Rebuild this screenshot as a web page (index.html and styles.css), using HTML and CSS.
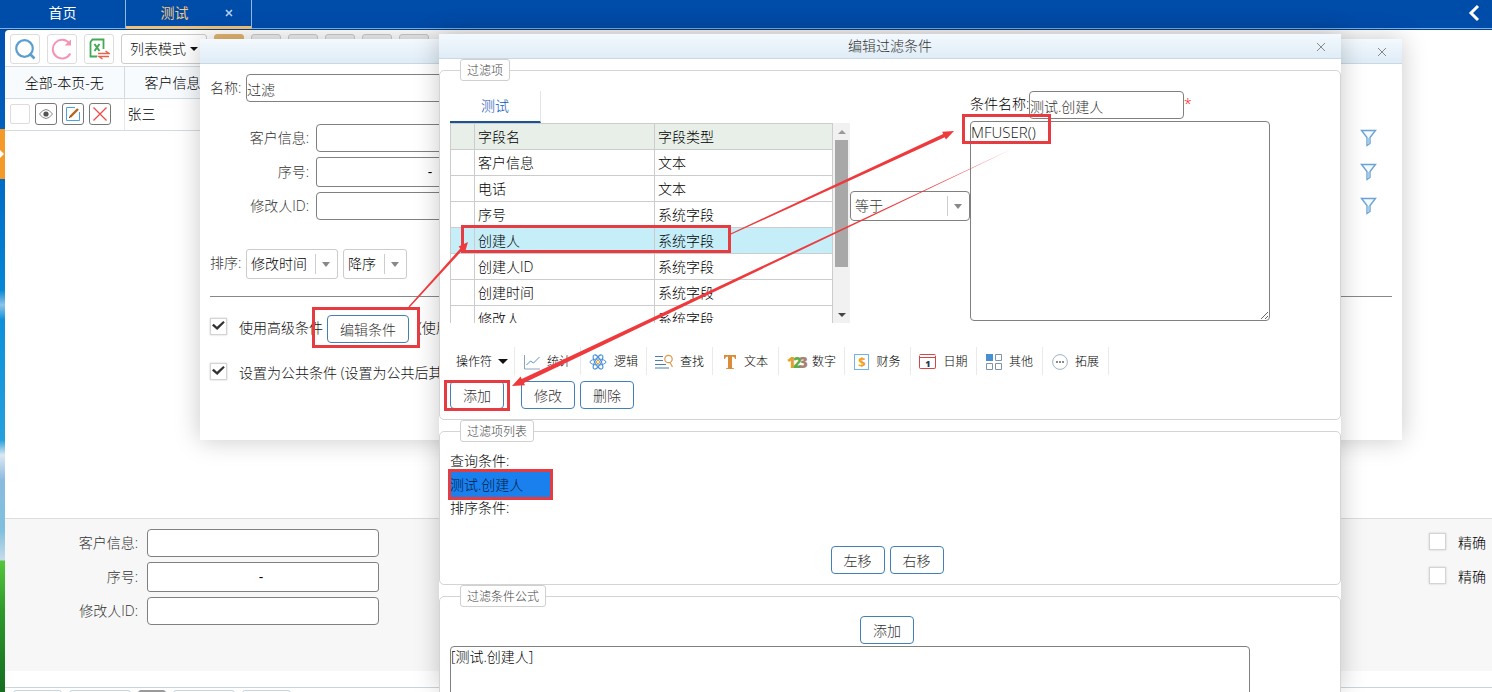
FILE: index.html
```html
<!DOCTYPE html>
<html lang="zh-CN">
<head>
<meta charset="utf-8">
<title>编辑过滤条件</title>
<link rel="stylesheet" href="styles.css">
</head>
<body>
<header class="topbar">
  <nav class="tabs">
    <a class="tab" href="#home">首页</a>
    <a class="tab tab-active" href="#test">测试</a>
    <button class="tab-close" aria-label="关闭标签"><svg width="8" height="8" viewBox="0 0 8 8"><path d="M1 1l6 6M7 1L1 7" stroke="#b9cfee" stroke-width="1.6"/></svg></button>
  </nav>
  <button class="collapse" aria-label="收起"><svg width="12" height="18" viewBox="0 0 12 18"><path d="M10 2L3 9l7 7" fill="none" stroke="#fff" stroke-width="3"/></svg></button>
</header>

<div class="shell">
  <aside class="scenery"><button class="handle" aria-label="展开"><svg width="5" height="10" viewBox="0 0 5 10"><path d="M0 1l4 4-4 4z" fill="#fff"/></svg></button></aside>
  <main class="page">
    <div class="toolbar">
      <button class="tool" aria-label="查询"><svg width="22" height="22" viewBox="0 0 22 22" fill="none" stroke="#5b9fd0" stroke-width="2.2"><circle cx="10.500" cy="10.500" r="8.300"/><path d="M15.500 15.500l5 5" stroke-width="2.600"/></svg></button>
      <button class="tool" aria-label="刷新"><svg width="22" height="22" viewBox="0 0 22 22" fill="none" stroke="#f595b2" stroke-width="2"><path d="M18.500 5.500A9.300 9.300 0 1 0 19.300 15.500"/><path d="M20 1.500v6h-6.500z" fill="#f595b2" stroke="none"/></svg></button>
      <button class="tool" aria-label="导出"><svg width="22" height="22" viewBox="0 0 22 22" fill="none" stroke="#45a854" stroke-width="1.800"><path d="M9 18.500H2.500V4l2-2.500H15.500V11"/><path d="M6.500 6l5 7M11.500 6l-5 7" stroke-width="2"/><path d="M10 15.500h11l-3.500-2.500M21 18.500H11l3.500 2.500" stroke="#e8604f" stroke-width="1.500"/></svg></button>
      <button class="mode">列表模式<span class="caret"></span></button>
      <div class="chips"><button class="chip chip-on" aria-label="视图 1"></button><button class="chip" aria-label="视图 2"></button><button class="chip" aria-label="视图 3"></button><button class="chip" aria-label="视图 4"></button><button class="chip" aria-label="视图 5"></button><button class="chip" aria-label="视图 6"></button></div>
    </div>
    <table class="grid">
      <thead><tr><th class="grid-tools">全部-本页-无</th><th class="grid-name">客户信息</th></tr></thead>
      <tbody><tr>
        <td><div class="row-tools">
          <input type="checkbox" class="pick" aria-label="选择张三">
          <button class="mini" aria-label="查看"><svg width="16" height="16" viewBox="0 0 16 16" fill="none" stroke="#888"><path d="M1.500 8Q8-1 14.500 8Q8 17 1.500 8z"/><circle cx="8" cy="8" r="2.600" fill="#555" stroke="none"/></svg></button>
          <button class="mini" aria-label="编辑"><svg width="16" height="16" viewBox="0 0 16 16" fill="none" stroke="#4da3e0"><path d="M10 1.500H1.500v13h13V6"/><path d="M5 11L13 3" stroke="#b5651d" stroke-width="2.400"/><path d="M4 12l1.500-1.500" stroke="#444"/></svg></button>
          <button class="mini" aria-label="删除"><svg width="16" height="16" viewBox="0 0 16 16"><path d="M1.500 1.500l13 13M14.500 1.500l-13 13" stroke="#ea4b4b" stroke-width="1.300"/></svg></button>
        </div></td>
        <td>张三</td>
      </tr></tbody>
    </table>
    <section class="search">
      <div class="fields">
        <div class="field"><label for="s1">客户信息:</label><input id="s1" class="text" type="text"></div>
        <div class="field"><label for="s2">序号:</label><div class="range"><input id="s2" type="text"><span>-</span><input type="text" aria-label="序号止"></div></div>
        <div class="field"><label for="s3">修改人ID:</label><input id="s3" class="text" type="text"></div>
      </div>
      <div class="exact">
        <label class="check"><input type="checkbox">精确</label>
        <label class="check"><input type="checkbox">精确</label>
      </div>
    </section>
    <footer class="pager"><span class="pg pg-s"></span><span class="pg"></span><span class="pg pg-now"></span><span class="pg"></span><span class="pg pg-s"></span></footer>
  </main>
</div>

<section class="dialog dialog-filter" aria-label="过滤">
  <div class="dialog-head"><button class="x" aria-label="关闭"><svg width="10" height="10" viewBox="0 0 10 10"><path d="M1 1l8 8M9 1L1 9" stroke="#888"/></svg></button></div>
  <div class="filter-body">
    <div class="name-row"><label for="fname">名称:</label><input id="fname" class="text" type="text" value="过滤"></div>
    <div class="fields filter-fields">
      <div class="field"><label for="f1">客户信息:</label><input id="f1" class="text" type="text"><svg class="funnel" width="18" height="18" viewBox="0 0 18 18"><path d="M1.500 1.500h14L10 8.500v6l-3 2v-8z" fill="#f4faff" stroke="#6aa3d5" stroke-width="1.400"/><path d="M7.500 9h2v5l-2 1.500z" fill="#a9c9e6"/></svg></div>
      <div class="field"><label for="f2">序号:</label><div class="range"><input id="f2" type="text"><span>-</span><input type="text" aria-label="序号止"></div><svg class="funnel" width="18" height="18" viewBox="0 0 18 18"><path d="M1.500 1.500h14L10 8.500v6l-3 2v-8z" fill="#f4faff" stroke="#6aa3d5" stroke-width="1.400"/><path d="M7.500 9h2v5l-2 1.500z" fill="#a9c9e6"/></svg></div>
      <div class="field"><label for="f3">修改人ID:</label><input id="f3" class="text" type="text"><svg class="funnel" width="18" height="18" viewBox="0 0 18 18"><path d="M1.500 1.500h14L10 8.500v6l-3 2v-8z" fill="#f4faff" stroke="#6aa3d5" stroke-width="1.400"/><path d="M7.500 9h2v5l-2 1.500z" fill="#a9c9e6"/></svg></div>
    </div>
    <div class="sort-row"><label for="sort">排序:</label>
      <div class="select select-time"><select id="sort"><option>修改时间</option></select></div>
      <div class="select select-dir"><select aria-label="方向"><option>降序</option></select></div>
    </div>
    <hr>
    <div class="option"><label class="check"><input type="checkbox" checked>使用高级条件</label><button class="btn btn-wide">编辑条件</button><span>(使用</span></div>
    <div class="option"><label class="check"><input type="checkbox" checked>设置为公共条件 (设置为公共后其</label></div>
  </div>
</section>

<section class="dialog dialog-edit" aria-label="编辑过滤条件">
  <div class="dialog-head"><h2>编辑过滤条件</h2><button class="x" aria-label="关闭"><svg width="10" height="10" viewBox="0 0 10 10"><path d="M1 1l8 8M9 1L1 9" stroke="#888"/></svg></button></div>
  <fieldset>
    <legend>过滤项</legend>
    <div class="editor">
      <div class="picker">
        <button class="pick-tab">测试</button>
        <div class="list">
          <table class="cols">
            <thead><tr><th class="c-mark"></th><th class="c-name">字段名</th><th>字段类型</th></tr></thead>
            <tbody>
              <tr><td></td><td>客户信息</td><td>文本</td></tr>
              <tr><td></td><td>电话</td><td>文本</td></tr>
              <tr><td></td><td>序号</td><td>系统字段</td></tr>
              <tr class="on"><td></td><td>创建人</td><td>系统字段</td></tr>
              <tr><td></td><td>创建人ID</td><td>系统字段</td></tr>
              <tr><td></td><td>创建时间</td><td>系统字段</td></tr>
              <tr><td></td><td>修改人</td><td>系统字段</td></tr>
            </tbody>
          </table>
          <div class="scroll"><i class="up"></i><div class="track"><div class="thumb"></div></div><i class="down"></i></div>
        </div>
      </div>
      <div class="select select-op"><select aria-label="比较"><option>等于</option></select></div>
      <div class="value">
        <div class="value-name"><label for="cname">条件名称:</label><input id="cname" class="text" type="text" value="测试.创建人"><span class="star">*</span></div>
        <textarea class="expr" aria-label="条件值">MFUSER()</textarea>
      </div>
    </div>
    <div class="ops">
      <button class="op op-first">操作符<span class="caret"></span></button>
      <button class="op"><svg width="16" height="16" viewBox="0 0 16 16" fill="none" stroke="#5b8fc9"><path d="M.5 1v14H16" stroke="#8aa4bf"/><path d="M2.500 11l4-4 3 2 6-6"/></svg>统计</button>
      <button class="op"><svg width="18" height="16" viewBox="0 0 18 16" fill="none" stroke="#4a90d9"><ellipse cx="9" cy="8" rx="8" ry="3"/><ellipse cx="9" cy="8" rx="8" ry="3" transform="rotate(60 9 8)"/><ellipse cx="9" cy="8" rx="8" ry="3" transform="rotate(120 9 8)"/><circle cx="9" cy="8" r="1.600" stroke="#e8963c"/></svg>逻辑</button>
      <button class="op"><svg width="18" height="16" viewBox="0 0 18 16" fill="none" stroke="#4a7fae" stroke-width="1.200"><path d="M0 2.500h8M0 6.500h8M0 10.500h11M0 14h14"/><circle cx="13.500" cy="5" r="3.700" stroke="#dd9a4a"/><path d="M15 8.500l2.500 4.500" stroke="#dd9a4a"/></svg>查找</button>
      <button class="op"><svg width="14" height="16" viewBox="0 0 14 16"><path d="M1 1h12v4h-1c-.3-1.700-1-2.300-3-2.300v10.500c0 .8.600 1 2 1V15H3v-.8c1.400 0 2-.2 2-1V2.700c-2 0-2.700.6-3 2.300H1z" fill="#d98c3a"/></svg>文本</button>
      <button class="op"><span class="digits"><b class="d1">1</b><b class="d2">2</b><b class="d3">3</b></span>数字</button>
      <button class="op"><span class="money">$</span>财务</button>
      <button class="op"><span class="cal"><b>1</b></span>日期</button>
      <button class="op"><svg width="16" height="16" viewBox="0 0 16 16" fill="none" stroke="#7b93ad"><path d="M0 0h7v7H0z" fill="#4a8fd0" stroke="none"/><path d="M9.500.5h6v6h-6zM.5 9.500h6v6h-6zM9.500 9.500h6v6h-6z"/></svg>其他</button>
      <button class="op"><svg width="16" height="16" viewBox="0 0 16 16"><circle cx="8" cy="8" r="7.400" fill="#fff" stroke="#9fb3c6"/><g fill="#666"><circle cx="5" cy="8" r="1"/><circle cx="8" cy="8" r="1"/><circle cx="11" cy="8" r="1"/></g></svg>拓展</button>
    </div>
    <div class="actions"><button class="btn btn-add">添加</button><button class="btn">修改</button><button class="btn">删除</button></div>
  </fieldset>
  <fieldset>
    <legend>过滤项列表</legend>
    <div class="conds">
      <p>查询条件:</p>
      <button class="cond">测试.创建人</button>
      <p>排序条件:</p>
    </div>
    <div class="move"><button class="btn">左移</button><button class="btn">右移</button></div>
  </fieldset>
  <fieldset>
    <legend>过滤条件公式</legend>
    <div class="formula-add"><button class="btn">添加</button></div>
    <textarea class="formula" aria-label="过滤条件公式">[测试.创建人]</textarea>
  </fieldset>
</section>

<svg class="marks" width="1100" height="520" viewBox="0 0 1100 520" fill="#ee3a3c">
  <g fill="none" stroke="#e63c41" stroke-width="3">
    <rect x="313.500" y="308.500" width="105" height="38"/>
    <rect x="462.500" y="226.500" width="267" height="25"/>
    <rect x="963.500" y="115.500" width="86" height="27"/>
    <rect x="445.500" y="381.500" width="63" height="28"/>
    <rect x="449.500" y="470.500" width="102" height="28"/>
  </g>
  <path d="M408.500 306.500L460.300 248.500 458.600 246.500 468 242 465 252.300 462.300 250.300 409.500 307.500z"/>
  <path d="M730.600 233.500L943.200 134 942.200 131.800 954 131 946 139.600 944.800 137.200 731 234.500z"/>
  <path d="M1012 149L521.700 379 520.600 376.500 512 386 525 385.300 523.900 383z"/>
</svg>
</body>
</html>
```
FILE: styles.css
```css
* { box-sizing: border-box; }
body {
  margin: 0;
  height: 100vh;
  overflow: hidden;
  display: flex;
  flex-direction: column;
  position: relative;
  background: #fff;
  color: #111;
  font: 300 14px/20px "Open Sans", "Noto Sans CJK SC", sans-serif;
}
button, input, select, textarea { font: inherit; color: inherit; margin: 0; }
button { padding: 0; border: 0; background: none; }
button svg { display: block; }
p, h2 { margin: 0; font: inherit; }

.topbar {
  display: flex;
  justify-content: space-between;
  height: 30px;
  flex: none;
  background: #004ca9;
  border-bottom: 1px solid #0b3f86;
  box-shadow: inset 0 -1px #79b4ea;
  color: #fff;
}
.tabs { display: flex; position: relative; }
.tab {
  width: 126px;
  height: 29px;
  padding-top: 3px;
  border-right: 1px solid #8dbbe8;
  color: #fff;
  font-weight: 400;
  text-align: center;
  text-decoration: none;
}
.tab-active { padding-right: 28px; border-bottom: 3px solid #f0c277; color: #f3c980; }
.tab-close { position: absolute; right: 19px; top: 9px; }
.collapse { padding: 0 12px 4px; }

.shell { display: flex; flex: 1; min-height: 0; background: #0050ac; }
.scenery {
  width: 5px;
  padding-top: 99px;
  background: linear-gradient(#004fae, #0068c4 140px, #0487d6 260px, #8cc4e8 275px, #0b90da 290px, #24a0de 410px, #dbe8f2 425px, #8bbbe0 450px, #7fc0dc 500px, #c6dbec 530px, #55c63c 531px, #2f9a2b 580px, #156e1f);
}
.handle { display: flex; align-items: center; width: 5px; height: 50px; background: #f49a28; }
.page {
  flex: 1;
  min-width: 0;
  display: flex;
  flex-direction: column;
  background: #fff;
  border-top-left-radius: 4px;
}
.toolbar { display: flex; gap: 7px; padding: 4px 5px 2px; height: 36px; }
.tool { display: flex; align-items: center; justify-content: center; width: 30px; height: 30px; border: 1px solid #ddd; border-radius: 3px; background: #fff; }
.mode { width: 86px; height: 30px; border: 1px solid #ccc; border-radius: 3px; background: #fff; white-space: nowrap; }
.caret { display: inline-block; margin: 0 0 3px 4px; border: solid transparent; border-width: 4px 4px 0; border-top-color: #111; }
.chips { display: flex; gap: 7px; }
.chip { width: 30px; height: 30px; border: 1px solid #ccc; border-radius: 3px; background: #eee; }
.chip-on { background: #e3b56f; border-color: #e3b56f; }

.grid { width: 40%; border-collapse: collapse; table-layout: fixed; color: #000; }
.grid th { height: 32px; padding: 0; background: #f8fbfe; border: solid #d4dae0; border-width: 1px 1px 1px 0; font-weight: 300; }
.grid td { height: 32px; padding: 0 3px 2px; border-bottom: 1px solid #d4dae0; border-right: 1px solid #e4e8ec; }
.grid .grid-tools { width: 119px; }
.grid .grid-name { padding-left: 20px; text-align: left; }
.row-tools { display: flex; align-items: center; gap: 5px; padding-left: 2px; }
.mini { display: flex; align-items: center; justify-content: center; width: 22px; height: 22px; border: 1px solid #777; border-radius: 3px; background: #fff; }
.pick { appearance: none; width: 20px; height: 20px; border: 1px solid #ddd; border-radius: 2px; background: #fff; }

.search {
  display: flex;
  justify-content: space-between;
  height: 153px;
  margin-top: auto;
  padding: 10px 6px 0 0;
  border-top: 1px solid #ddd;
  background: #f7f7f7;
}
.fields { display: flex; flex-direction: column; gap: 5px; color: #333; }
.field { display: flex; align-items: center; gap: 9px; }
.field label { width: 133px; text-align: right; }
.text { height: 28px; padding: 1px 0 0; border: 1px solid #808080; border-radius: 4px; background: #fff; color: #333; }
.field .text { width: 232px; }
.range { display: flex; align-items: center; width: 232px; height: 30px; border: 1px solid #808080; border-radius: 3px; background: #fff; color: #000; }
.range input { flex: 1; min-width: 0; height: 100%; border: 0; background: none; }
.range span { padding: 0 4px 0 0; font-weight: 400; }
.exact { display: flex; flex-direction: column; gap: 14px; padding-top: 4px; color: #000; }
.check { display: flex; gap: 12px; white-space: nowrap; }
.check input {
  appearance: none;
  width: 17px;
  height: 17px;
  flex: none;
  background: #fff;
  border: 1px solid #d4d4d4;
  box-shadow: 0 0 2px #ccc;
}
.check input:checked::before {
  content: "";
  display: block;
  width: 13px;
  height: 11px;
  margin: 1px;
  background: #333;
  clip-path: polygon(0 50%, 13% 34%, 38% 62%, 87% 8%, 98% 22%, 40% 92%);
}
.pager {
  display: flex;
  gap: 7px;
  height: 21px;
  padding: 19px 8px 0;
  background: linear-gradient(#fff 16px, #ccd3da 16px, #ccd3da 17px, #fff 17px);
  overflow: hidden;
}
.pg { width: 62px; height: 20px; flex: none; border: 1px solid #c4d4e2; border-radius: 3px; }
.pg-s { width: 49px; }
.pg-now { width: 28px; background: #999; border-color: #999; }

.dialog { position: absolute; background: #fff; box-shadow: 0 0 24px rgba(0, 0, 0, .22); }
.dialog-filter { left: 200px; right: 90px; top: 39px; height: 401px; }
.dialog-edit { left: 439px; right: 151px; top: 34px; bottom: 0; display: flex; flex-direction: column; }
.dialog-head {
  position: relative;
  height: 25px;
  flex: none;
  padding-top: 2px;
  background: linear-gradient(#f3f9fe, #dfecf6);
  border-bottom: 1px solid #c9d8e4;
  text-align: center;
  color: #333;
}
.x { position: absolute; right: 15px; top: 8px; }

.filter-body { padding: 10px 10px 0; }
.name-row, .sort-row { display: flex; gap: 5px; }
.name-row > label, .sort-row > label { padding-top: 4px; width: 31px; white-space: nowrap; color: #333; }
.name-row .text { width: 60%; }
.filter-fields { padding-top: 22px; }
.filter-fields .field { gap: 7px; }
.filter-fields .field label { width: 99px; }
.funnel { margin: 0 14px 0 auto; }
.sort-row { padding-top: 29px; }
.select { position: relative; height: 30px; border: 1px solid #ccc; border-radius: 3px; background: #fff; }
.select select { appearance: none; width: 100%; height: 100%; padding: 0 4px; border: 0; background: none; color: #000; }
.select::before { content: ""; position: absolute; right: 21px; top: 4px; bottom: 4px; border-left: 1px solid #ccc; }
.select::after { content: ""; position: absolute; right: 7px; top: 12px; border: solid transparent; border-width: 5px 4px 0; border-top-color: #888; }
.select-time { width: 92px; }
.select-dir { width: 64px; }
hr { height: 1px; margin: 17px 0 18px; border: 0; background: #888; }
.option { display: flex; align-items: flex-start; height: 45px; }
.option .check { padding-top: 3px; }
.option .btn { margin: 0 9px 0 4px; }
.option > span { padding-top: 3px; }
.btn { width: 54px; height: 28px; padding-top: 2px; border: 1px solid #4380b8; border-radius: 4px; background: #fff; color: #333; }
.btn-wide { width: 82px; }

fieldset { flex: none; margin: 0; padding: 0 16px 10px 10px; min-width: 0; border: 1px solid #d4d4d4; border-radius: 5px; }
legend { height: 22px; margin-left: 10px; padding: 0 6px; border: 1px solid #d0d0d0; border-radius: 3px; font-size: 12px; line-height: 21px; color: #444; }
.editor { display: flex; padding-top: 10px; }
.picker { width: 400px; flex: none; }
.pick-tab { display: block; width: 91px; height: 32px; border-bottom: 2px solid #1a5294; border-right: 1px solid #e4e4e4; color: #0a52b8; }
.list { display: flex; height: 200px; overflow: hidden; }
.cols { flex: 1; align-self: flex-start; border-collapse: collapse; table-layout: fixed; color: #000; }
.cols th, .cols td { height: 26px; padding: 0 3px; border: 1px solid #ccc; text-align: left; font-weight: 300; }
.cols th { background: #e8efe8; }
.cols .c-mark { width: 24px; }
.cols .c-name { width: 180px; }
.cols .on { background: #c5eef8; }
.scroll { display: flex; flex-direction: column; align-items: center; width: 17px; background: #f1f1f1; }
.scroll i { height: 17px; }
.up::before, .down::before { content: ""; display: block; margin-top: 7px; border: solid transparent; }
.up::before { border-width: 0 4px 4px; border-bottom-color: #999; }
.down::before { border-width: 4px 4px 0; border-top-color: #444; }
.track { flex: 1; }
.thumb { width: 13px; height: 127px; background: #a8a8a8; }
.select-op { width: 120px; margin-top: 100px; border-color: #808080; border-radius: 4px; flex: none; }
.select-op select { color: #333; }
.value { width: 300px; flex: none; }
.value-name { display: flex; height: 30px; }
.value-name label { width: 59px; padding-top: 3px; white-space: nowrap; color: #000; }
.value-name .text { width: 155px; }
.star { padding: 3px 0; color: #f00; }
textarea { display: block; padding: 0; border: 1px solid #808080; border-radius: 4px; background: #fff; }
.expr { width: 300px; height: 200px; font-size: 15px; }
.ops { display: flex; margin-top: 24px; height: 28px; }
.op { display: flex; align-items: center; justify-content: center; gap: 7px; width: 66px; padding-top: 1px; border-right: 1px solid #eaeaea; font-size: 12px; white-space: nowrap; color: #000; }
.op-first { width: 65px; gap: 2px; }
.op-first .caret { margin: 0 0 0 4px; border-width: 5px 5px 0; }
.digits { display: flex; font: 700 15px/16px "Liberation Sans Narrow", "Open Sans", sans-serif; }
.digits b { width: 6px; }
.d1 { color: #e0a030; }
.d2 { color: #5fae45; }
.d3 { color: #a8826c; }
.money { width: 15px; height: 16px; border: 1px solid #6fb2ee; font: 700 13px/14px "Open Sans", sans-serif; color: #f0a020; }
.cal { width: 17px; height: 15px; border: 1px solid #d04848; border-top-width: 4px; border-top-style: double; border-radius: 2px; font: 700 9px/11px "Open Sans", sans-serif; color: #335; }
.actions { display: flex; gap: 5px; margin-top: 6px; }
.btn-add { margin-right: 12px; }
.conds { display: flex; flex-direction: column; align-items: flex-start; padding-top: 9px; color: #000; }
.cond { width: 101px; height: 25px; margin: 1px 0; background: #1a80ee; color: #001c48; text-align: left; }
.move { display: flex; justify-content: center; gap: 5px; margin-top: 28px; }
.formula-add { display: flex; justify-content: center; padding: 9px 0 2px; }
.formula { width: 800px; max-width: 100%; height: 100px; color: #000; }
.marks { position: absolute; left: 0; top: 0; pointer-events: none; }
```
